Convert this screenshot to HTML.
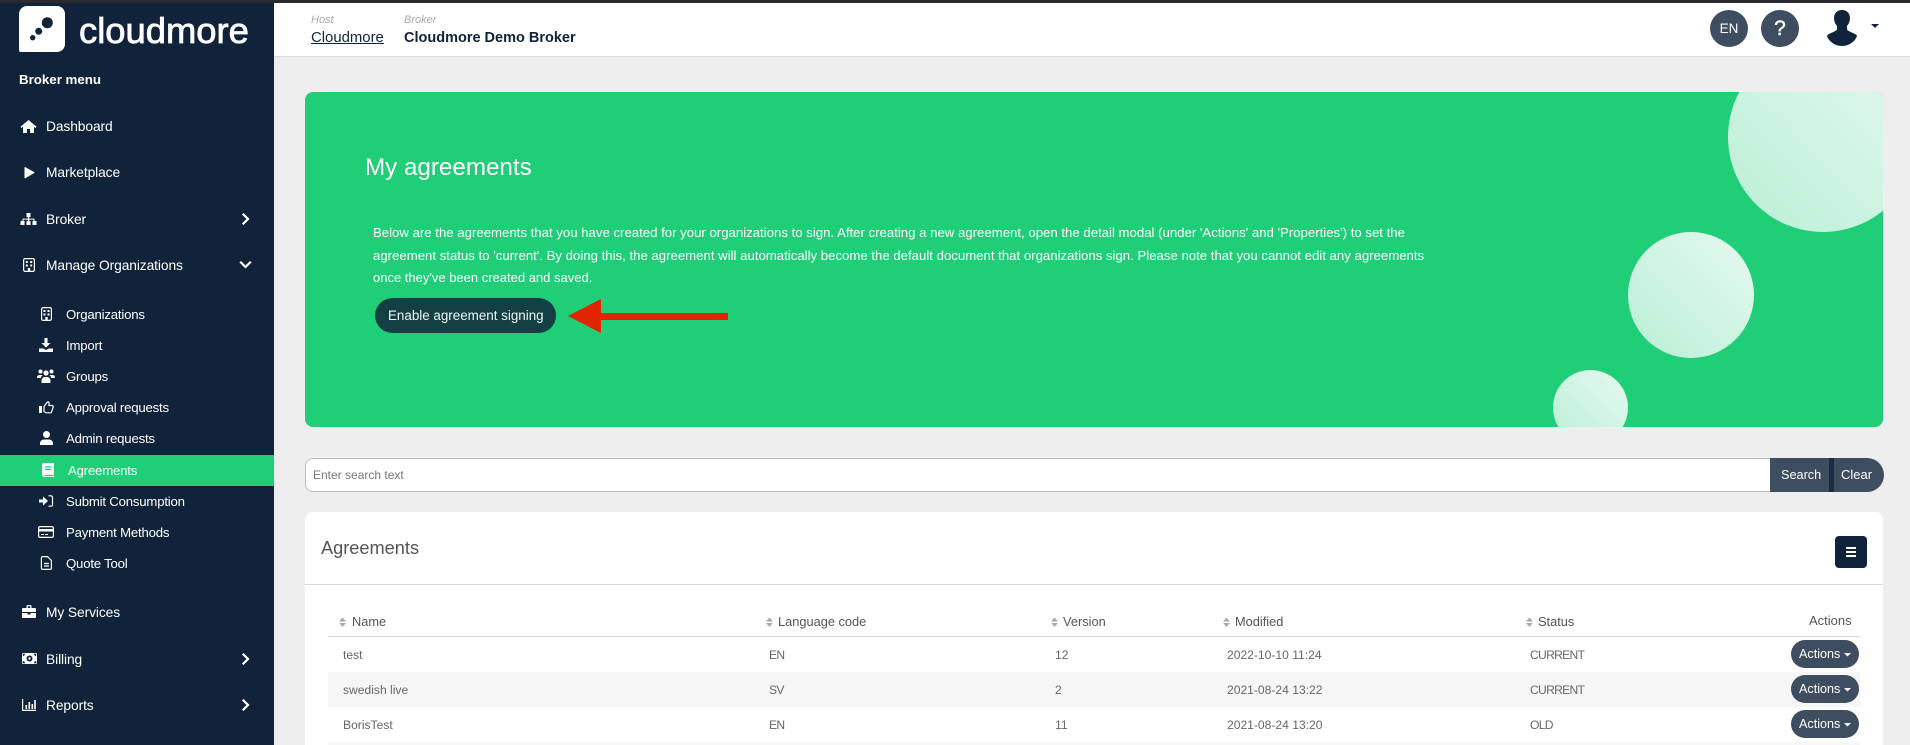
<!DOCTYPE html>
<html lang="en">
<head>
<meta charset="utf-8">
<title>My agreements</title>
<style>
html,body{margin:0;padding:0;width:1910px;height:745px;overflow:hidden;background:#eeeeee;font-family:"Liberation Sans",sans-serif}
*{box-sizing:border-box}
.a{position:absolute}
.t{position:absolute;white-space:nowrap;line-height:20px}
#side{position:absolute;left:0;top:0;width:274px;height:745px;background:#10233b}
#top{position:absolute;left:0;top:0;width:1910px;height:3px;background:#2a2a2e;z-index:5}
#head{position:absolute;left:274px;top:0;width:1636px;height:57px;background:#fff;border-bottom:1px solid #d8dce3}
.m{color:#fff;font-size:13.8px;letter-spacing:-.1px}
.s{color:#fff;font-size:13.2px;letter-spacing:-.2px}
.h{color:#555;font-size:12.8px}
.c{color:#666;font-size:12.1px}
.u{letter-spacing:-.7px}
.circ{position:absolute;border-radius:50%;background:linear-gradient(45deg,#b9efd5,#e6f9f0)}
.btn{position:absolute;left:1791px;width:68px;height:28px;border-radius:14px;background:#3f4d60;color:#fff;font-size:12.6px;line-height:28px;padding-left:8px;white-space:nowrap}
.round{position:absolute;top:10px;width:38px;height:37px;border-radius:50%;background:#3f4d60;color:#fff;text-align:center;line-height:37px}
</style>
</head>
<body>
<div id="side"></div>
<div id="top"></div>
<div id="head"></div>

<!-- logo -->
<div class="a" style="left:19px;top:6px;width:45.5px;height:46px;background:#fff;border-radius:8px 8px 8px 2px"></div>
<div class="t" style="left:79px;top:11px;line-height:40px;font-size:36.4px;color:#fff;-webkit-text-stroke:.8px #fff">cloudmore</div>

<div class="t" style="left:19px;top:70px;font-size:13.3px;font-weight:bold;color:#fff">Broker menu</div>

<div class="t m" style="left:46px;top:117px">Dashboard</div>
<div class="t m" style="left:46px;top:163px">Marketplace</div>
<div class="t m" style="left:46px;top:210px">Broker</div>
<div class="t m" style="left:46px;top:256px">Manage Organizations</div>

<div class="t s" style="left:66px;top:305px">Organizations</div>
<div class="t s" style="left:66px;top:336px">Import</div>
<div class="t s" style="left:66px;top:367px">Groups</div>
<div class="t s" style="left:66px;top:398px">Approval requests</div>
<div class="t s" style="left:66px;top:429px">Admin requests</div>
<div class="a" style="left:0;top:455px;width:274px;height:31px;background:#20ce78"></div>
<div class="t s" style="left:68px;top:461px">Agreements</div>
<div class="t s" style="left:66px;top:492px">Submit Consumption</div>
<div class="t s" style="left:66px;top:523px">Payment Methods</div>
<div class="t s" style="left:66px;top:554px">Quote Tool</div>

<div class="t m" style="left:46px;top:603px">My Services</div>
<div class="t m" style="left:46px;top:650px">Billing</div>
<div class="t m" style="left:46px;top:696px">Reports</div>

<!-- header -->
<div class="t" style="left:311px;top:10px;font-size:11px;font-style:italic;color:#a9a9a9">Host</div>
<div class="t" style="left:311px;top:28px;font-size:14.9px;color:#10233b;text-decoration:underline">Cloudmore</div>
<div class="t" style="left:404px;top:10px;font-size:11px;font-style:italic;color:#a9a9a9">Broker</div>
<div class="t" style="left:404px;top:28px;font-size:14.5px;font-weight:bold;color:#10233b">Cloudmore Demo Broker</div>
<div class="round" style="left:1710px;font-size:13.5px">EN</div>
<div class="round" style="left:1761px;font-size:21px;-webkit-text-stroke:.4px #fff">?</div>

<!-- banner -->
<div class="a" style="left:305px;top:92px;width:1578px;height:335px;background:#20ce78;border-radius:8px;overflow:hidden">
  <div class="circ" style="left:1423px;top:-50px;width:190px;height:190px"></div>
  <div class="circ" style="left:1323px;top:140px;width:126px;height:126px"></div>
  <div class="circ" style="left:1248px;top:278px;width:75px;height:75px"></div>
</div>
<div class="t" style="left:365px;top:154px;line-height:28px;font-size:24.2px;color:#fff">My agreements</div>
<div class="t" style="left:373px;top:223px;font-size:13.2px;color:#fff">Below are the agreements that you have created for your organizations to sign. After creating a new agreement, open the detail modal (under 'Actions' and 'Properties') to set the</div>
<div class="t" style="left:373px;top:246px;font-size:13.2px;color:#fff">agreement status to 'current'. By doing this, the agreement will automatically become the default document that organizations sign. Please note that you cannot edit any agreements</div>
<div class="t" style="left:373px;top:268px;font-size:13px;color:#fff">once they've been created and saved.</div>
<div class="a" style="left:375px;top:298px;width:181px;height:35px;border-radius:17.5px;background:#123f44"></div>
<div class="t" style="left:388px;top:306px;font-size:13.4px;color:#f0f5f4">Enable agreement signing</div>

<!-- search -->
<div class="a" style="left:305px;top:458px;width:1465px;height:34px;background:#fff;border:1px solid #bdbdbd;border-right:0;border-radius:8px 0 0 8px"></div>
<div class="t" style="left:313px;top:465px;font-size:12px;color:#777">Enter search text</div>
<div class="a" style="left:1770px;top:458px;width:114px;height:34px;background:#3f4d60;border-radius:0 17px 17px 0"></div>
<div class="a" style="left:1829px;top:458px;width:5px;height:34px;background:#1a2b45"></div>
<div class="t" style="left:1781px;top:465px;font-size:12.7px;color:#fff">Search</div>
<div class="t" style="left:1841px;top:465px;font-size:13px;color:#fff">Clear</div>

<!-- card -->
<div class="a" style="left:305px;top:512px;width:1578px;height:233px;background:#fff;border-radius:8px 8px 0 0"></div>
<div class="t" style="left:321px;top:538px;font-size:18.2px;color:#555">Agreements</div>
<div class="a" style="left:305px;top:584px;width:1578px;height:1px;background:#d9d9d9"></div>
<div class="a" style="left:1835px;top:536px;width:32px;height:32px;background:#10233b;border-radius:4px"></div>
<div class="a" style="left:1846px;top:547px;width:10px;height:2px;background:#fff"></div>
<div class="a" style="left:1846px;top:551px;width:10px;height:2px;background:#fff"></div>
<div class="a" style="left:1846px;top:555px;width:10px;height:2px;background:#fff"></div>

<div class="a" style="left:328px;top:636px;width:1532px;height:1px;background:#d5d5d5"></div>
<div class="a" style="left:328px;top:672px;width:1532px;height:35px;background:#f6f6f6"></div>
<div class="a" style="left:328px;top:742px;width:1532px;height:3px;background:#f6f6f6"></div>

<div class="t h" style="left:352px;top:612px">Name</div>
<div class="t h" style="left:778px;top:612px">Language code</div>
<div class="t h" style="left:1063px;top:612px">Version</div>
<div class="t h" style="left:1235px;top:612px">Modified</div>
<div class="t h" style="left:1538px;top:612px">Status</div>
<div class="t h" style="left:1809px;top:611px;font-size:13px">Actions</div>

<div class="t c" style="left:343px;top:645px">test</div>
<div class="t c u" style="left:769px;top:645px">EN</div>
<div class="t c" style="left:1055px;top:645px">12</div>
<div class="t c" style="left:1227px;top:645px">2022-10-10 11:24</div>
<div class="t c u" style="left:1530px;top:645px">CURRENT</div>

<div class="t c" style="left:343px;top:680px">swedish live</div>
<div class="t c u" style="left:769px;top:680px">SV</div>
<div class="t c" style="left:1055px;top:680px">2</div>
<div class="t c" style="left:1227px;top:680px">2021-08-24 13:22</div>
<div class="t c u" style="left:1530px;top:680px">CURRENT</div>

<div class="t c" style="left:343px;top:715px">BorisTest</div>
<div class="t c u" style="left:769px;top:715px">EN</div>
<div class="t c" style="left:1055px;top:715px">11</div>
<div class="t c" style="left:1227px;top:715px">2021-08-24 13:20</div>
<div class="t c u" style="left:1530px;top:715px">OLD</div>

<div class="btn" style="top:640px">Actions</div>
<div class="btn" style="top:675px">Actions</div>
<div class="btn" style="top:710px">Actions</div>

<!-- icon overlay -->
<svg class="a" style="left:0;top:0;z-index:4" width="1910" height="745" viewBox="0 0 1910 745" xmlns="http://www.w3.org/2000/svg">
  <!-- logo dots -->
  <g fill="#10233b"><circle cx="47.3" cy="22.7" r="5.5"/><circle cx="38.7" cy="31.3" r="3.5"/><circle cx="32.7" cy="37.7" r="2.7"/></g>

  <g fill="#fff">
    <!-- home -->
    <path transform="translate(20.5,120)" d="M8 0l8 6.800-1 1.200-1.500-1.100V13H9.600V9H6.400v4H2.500V6.900L1 8 0 6.800z"/>
    <!-- play -->
    <path d="M25 167.500 34 172.600 25 177.800z" stroke="#fff" stroke-width="1" stroke-linejoin="round"/>
    <!-- sitemap -->
    <path transform="translate(20.5,213)" d="M6 0h4v4H8.700v1.600H14V8h2v4h-4V8h1V6.600H8.700V8H10v4H6V8h1.300V6.600H3V8h1v4H0V8h2V5.600h5.300V4H6z"/>
    <!-- sub: import -->
    <g transform="translate(39,338)"><path d="M5.500 0h3v5h3L7 9.500 2.500 5h3z"/><path d="M0 10.500h4l3 1.500 3-1.500h4V14H0z"/></g>
    <!-- groups -->
    <g transform="translate(37,369)"><circle cx="3.500" cy="2.500" r="2"/><circle cx="14.500" cy="2.500" r="2"/><circle cx="9" cy="4" r="2.600"/><path d="M0 9c0-2 1-3 2.500-3h2c.4 0 .7.100 1 .3C4.500 7 4 8 3.800 9z"/><path d="M18 9c0-2-1-3-2.500-3h-2c-.4 0-.7.100-1 .3 1 .7 1.500 1.700 1.700 2.700z"/><path d="M4.500 14v-2c0-2.500 1.500-4 3-4h3c1.500 0 3 1.500 3 4v2z"/></g>
    <!-- user -->
    <g transform="translate(40,431)"><circle cx="6.500" cy="3.500" r="3.500"/><path d="M0 14v-1.500c0-2.500 2-4 4-4h5c2 0 4 1.500 4 4V14z"/></g>
    <!-- book -->
    <path transform="translate(42,463)" d="M2 0h9c.6 0 1 .4 1 1v10c0 .4-.3.7-.6.8v1.200h.6v1H2.500A2.500 2.500 0 0 1 0 11.500V2a2 2 0 0 1 2-2z"/>
    <!-- sign in -->
    <path transform="translate(39,495)" d="M0 4.500h4V1.500L9 6l-5 4.500V7.500H0z"/>
    <!-- briefcase -->
    <path transform="translate(22,605)" fill-rule="evenodd" d="M4.500 3V1.300C4.500.6 5 0 5.800 0h2.400c.8 0 1.300.6 1.300 1.300V3H13c.6 0 1 .4 1 1v3H0V4c0-.6.4-1 1-1zm1.300 0h2.400V1.300H5.800zM0 8h5.500v1.500h3V8H14v4c0 .6-.4 1-1 1H1c-.6 0-1-.4-1-1z"/>
    <!-- money -->
    <rect x="22" y="653" width="15" height="11" rx="1"/>
  </g>
  <g fill="#10233b">
    <circle cx="29.500" cy="658.500" r="3"/><circle cx="29.500" cy="658.500" r="1.200" fill="#fff"/>
    <path d="M22.800 653.800h2.200a2.200 2.200 0 0 1-2.200 2.200zM36.200 653.800h-2.200a2.200 2.200 0 0 0 2.200 2.200zM22.800 663.200h2.200a2.200 2.200 0 0 0-2.200-2.200zM36.200 663.200h-2.200a2.200 2.200 0 0 1 2.200-2.200z"/>
  </g>
  <!-- book details -->
  <g stroke="#20ce78" stroke-width="1.200" fill="none"><path d="M45 467h6M45 469.500h6M44.500 475.500h8.500"/></g>

  <g fill="none" stroke="#fff" stroke-width="1.200">
    <!-- building main -->
    <rect x="23.600" y="258.600" width="10.800" height="12.800" rx="1.500"/>
    <!-- building sub -->
    <rect x="41.600" y="307.600" width="9.800" height="12.800" rx="1.500"/>
    <!-- thumb -->
    <path transform="translate(39,401)" d="M5 5.500 8 1.500c.5-1 2-.8 2 .5v2.500h3c1 0 1.500.8 1.200 1.600L12.500 11c-.2.5-.6.8-1.200.8H7L5 10.500z"/>
    <!-- sign in bracket -->
    <path transform="translate(39,495)" d="M9.500.8H12a1.500 1.500 0 0 1 1.500 1.500v7.400a1.500 1.500 0 0 1-1.500 1.500H9.500"/>
    <!-- card -->
    <rect x="38.600" y="526.600" width="14.800" height="10.800" rx="1.500"/>
    <!-- file -->
    <path d="M42.800 556.600h4.700l3.900 3.900v7.500a1.400 1.400 0 0 1-1.400 1.400h-7.200a1.400 1.400 0 0 1-1.400-1.400v-10a1.400 1.400 0 0 1 1.400-1.400z"/>
    <path d="M44 563.500h5M44 566h5"/>
    <!-- chart -->
    <path d="M22.600 699v11.400H36"/>
  </g>
  <g fill="#fff">
    <!-- building windows -->
    <path d="M25.800 261h2v2h-2zM30.200 261h2v2h-2zM25.800 264.500h2v2h-2zM30.200 264.500h2v2h-2zM27.800 268h2.400v3h-2.400z"/>
    <path d="M43.500 310h2v2h-2zM47.500 310h2v2h-2zM43.500 313.500h2v2h-2zM47.500 313.500h2v2h-2zM45.300 317h2.400v3h-2.400z"/>
    <!-- thumb base -->
    <rect x="39" y="406" width="3" height="7"/>
    <!-- card band + dashes -->
    <rect x="39" y="529" width="14" height="2.500"/><rect x="41" y="534" width="3" height="1"/><rect x="45" y="534" width="3" height="1"/>
    <!-- chart bars -->
    <rect x="25.500" y="705" width="1.600" height="4"/><rect x="28.500" y="702" width="1.600" height="7"/><rect x="31.500" y="704" width="1.600" height="5"/><rect x="34.200" y="700" width="1.600" height="9"/>
  </g>

  <!-- chevrons -->
  <g fill="none" stroke="#fff" stroke-width="2.200" stroke-linecap="square">
    <path d="M243.500 214.500l4.500 4.500-4.500 4.500"/>
    <path d="M241 262.500l4.500 4.500 4.500-4.500"/>
    <path d="M243.500 654.500l4.500 4.500-4.500 4.500"/>
    <path d="M243.500 700.500l4.500 4.500-4.500 4.500"/>
  </g>

  <!-- header user -->
  <path transform="translate(1827,10)" fill="#10233b" d="M15 0c-5 0-8 3.500-8 8 0 3 1 5.500 3 8v3.500c-1 1.500-5 3-9.300 5.200L0 26c1.500 4.500 7 10 15 10s13.500-5.500 15-10l-.7-1.300C25 22.500 21 21 20 19.500V16c2-2.500 3-5 3-8 0-4.500-3-8-8-8z"/>
  <path d="M1871 24h8l-4 4z" fill="#10233b"/>

  <!-- red arrow -->
  <path d="M568 316 601 299V313H728V320H601V333Z" fill="#e22400"/>

  <!-- sort icons -->
  <g fill="#aaa">
    <path d="M339 621.500l3.500-4 3.500 4zM339 623l3.500 4 3.500-4z"/>
    <path d="M766 621.500l3.500-4 3.500 4zM766 623l3.500 4 3.500-4z"/>
    <path d="M1051 621.500l3.500-4 3.500 4zM1051 623l3.500 4 3.500-4z"/>
    <path d="M1223 621.500l3.500-4 3.500 4zM1223 623l3.500 4 3.500-4z"/>
    <path d="M1526 621.500l3.500-4 3.500 4zM1526 623l3.500 4 3.500-4z"/>
  </g>
  <!-- action carets -->
  <g fill="#fff">
    <path d="M1844 653h7l-3.500 3.500z"/>
    <path d="M1844 688h7l-3.500 3.500z"/>
    <path d="M1844 723h7l-3.500 3.500z"/>
  </g>
</svg>
</body>
</html>
